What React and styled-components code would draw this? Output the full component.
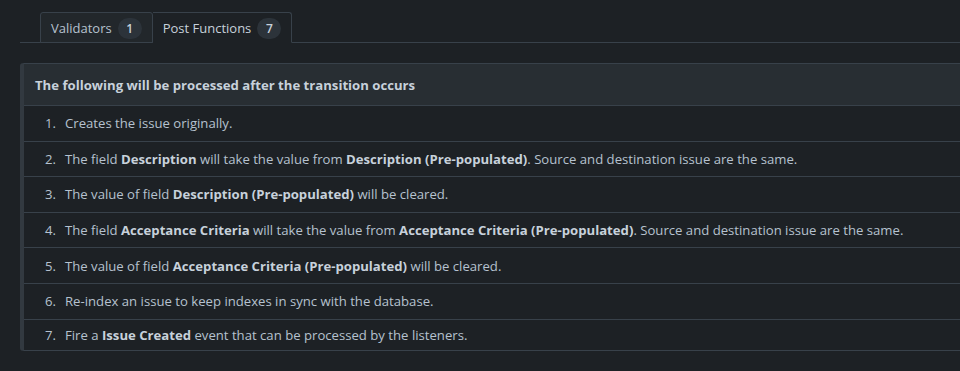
import React from "react";
import styled, { createGlobalStyle } from "styled-components";

const Global = createGlobalStyle`
  html, body { margin: 0; padding: 0; background: #1d2125; overflow: hidden; }
  body { font-family: "Open Sans", "Noto Sans", sans-serif; color: #b6c2cf; }
`;

const Page = styled.div`
  width: 960px;
  height: 371px;
  padding: 12px 0 0 20px;
  box-sizing: border-box;
  overflow: hidden;
`;

const TabBar = styled.div`
  display: flex;
  padding-left: 20px;
  border-bottom: 1px solid #38414a;
  width: 1100px;
`;

const Tab = styled.div`
  display: flex;
  align-items: center;
  gap: 6px;
  padding: 1px 10px 0;
  box-sizing: border-box;
  height: 31px;
  margin-bottom: -1px;
  font-size: 13px;
  color: ${(p) => (p.$active ? "#c7d1db" : "#b6c2cf")};
  background: ${(p) => (p.$active ? "#1d2125" : "#22272b")};
  border: 1px solid #38414a;
  border-bottom-color: ${(p) => (p.$active ? "#1d2125" : "#38414a")};
  border-left-width: ${(p) => (p.$active ? "0" : "1px")};
  border-radius: 3px 3px 0 0;
  ${(p) => p.$active && "border-top-left-radius: 0;"}
`;

const Badge = styled.span`
  display: inline-flex;
  align-items: center;
  justify-content: center;
  min-width: 24px;
  height: 21px;
  border-radius: 11px;
  background: #2c333a;
  color: #c7d1db;
  font-size: 12px;
  font-weight: 600;
`;

const Panel = styled.div`
  margin-top: 20px;
  width: 1100px;
  border-top: 1px solid #38414a;
  border-bottom: 1px solid #38414a;
  border-left: 4px solid #323940;
  border-radius: 3px 0 0 3px;
`;

const Header = styled.div`
  background: #282e33;
  height: 41px;
  display: flex;
  align-items: center;
  padding-left: 11px;
  font-size: 13.15px;
  font-weight: 700;
  color: #c7d1db;
  border-bottom: 1px solid #38414a;
`;

const List = styled.ol`
  list-style: none;
  margin: 0;
  padding: 0;
`;

const Row = styled.li`
  display: flex;
  align-items: center;
  height: 34.6px;
  font-size: 13.15px;
  color: #b6c2cf;
  & + & { border-top: 1px solid #38414a; }
  &:last-child { height: 30px; }
`;

const Num = styled.span`
  width: 20px;
  margin-left: 21px;
  text-align: left;
`;

const B = styled.b`
  font-weight: 700;
  color: #c7d1db;
`;

const items = [
  <>Creates the issue originally.</>,
  <>The field <B>Description</B> will take the value from <B>Description (Pre-populated)</B>. Source and destination issue are the same.</>,
  <>The value of field <B>Description (Pre-populated)</B> will be cleared.</>,
  <>The field <B>Acceptance Criteria</B> will take the value from <B>Acceptance Criteria (Pre-populated)</B>. Source and destination issue are the same.</>,
  <>The value of field <B>Acceptance Criteria (Pre-populated)</B> will be cleared.</>,
  <>Re-index an issue to keep indexes in sync with the database.</>,
  <>Fire a <B>Issue Created</B> event that can be processed by the listeners.</>,
];

export default function App() {
  return (
    <Page>
      <Global />
      <TabBar>
        <Tab>Validators <Badge>1</Badge></Tab>
        <Tab $active>Post Functions <Badge>7</Badge></Tab>
      </TabBar>
      <Panel>
        <Header>The following will be processed after the transition occurs</Header>
        <List>
          {items.map((c, i) => (
            <Row key={i}>
              <Num>{i + 1}.</Num>
              <span>{c}</span>
            </Row>
          ))}
        </List>
      </Panel>
    </Page>
  );
}
